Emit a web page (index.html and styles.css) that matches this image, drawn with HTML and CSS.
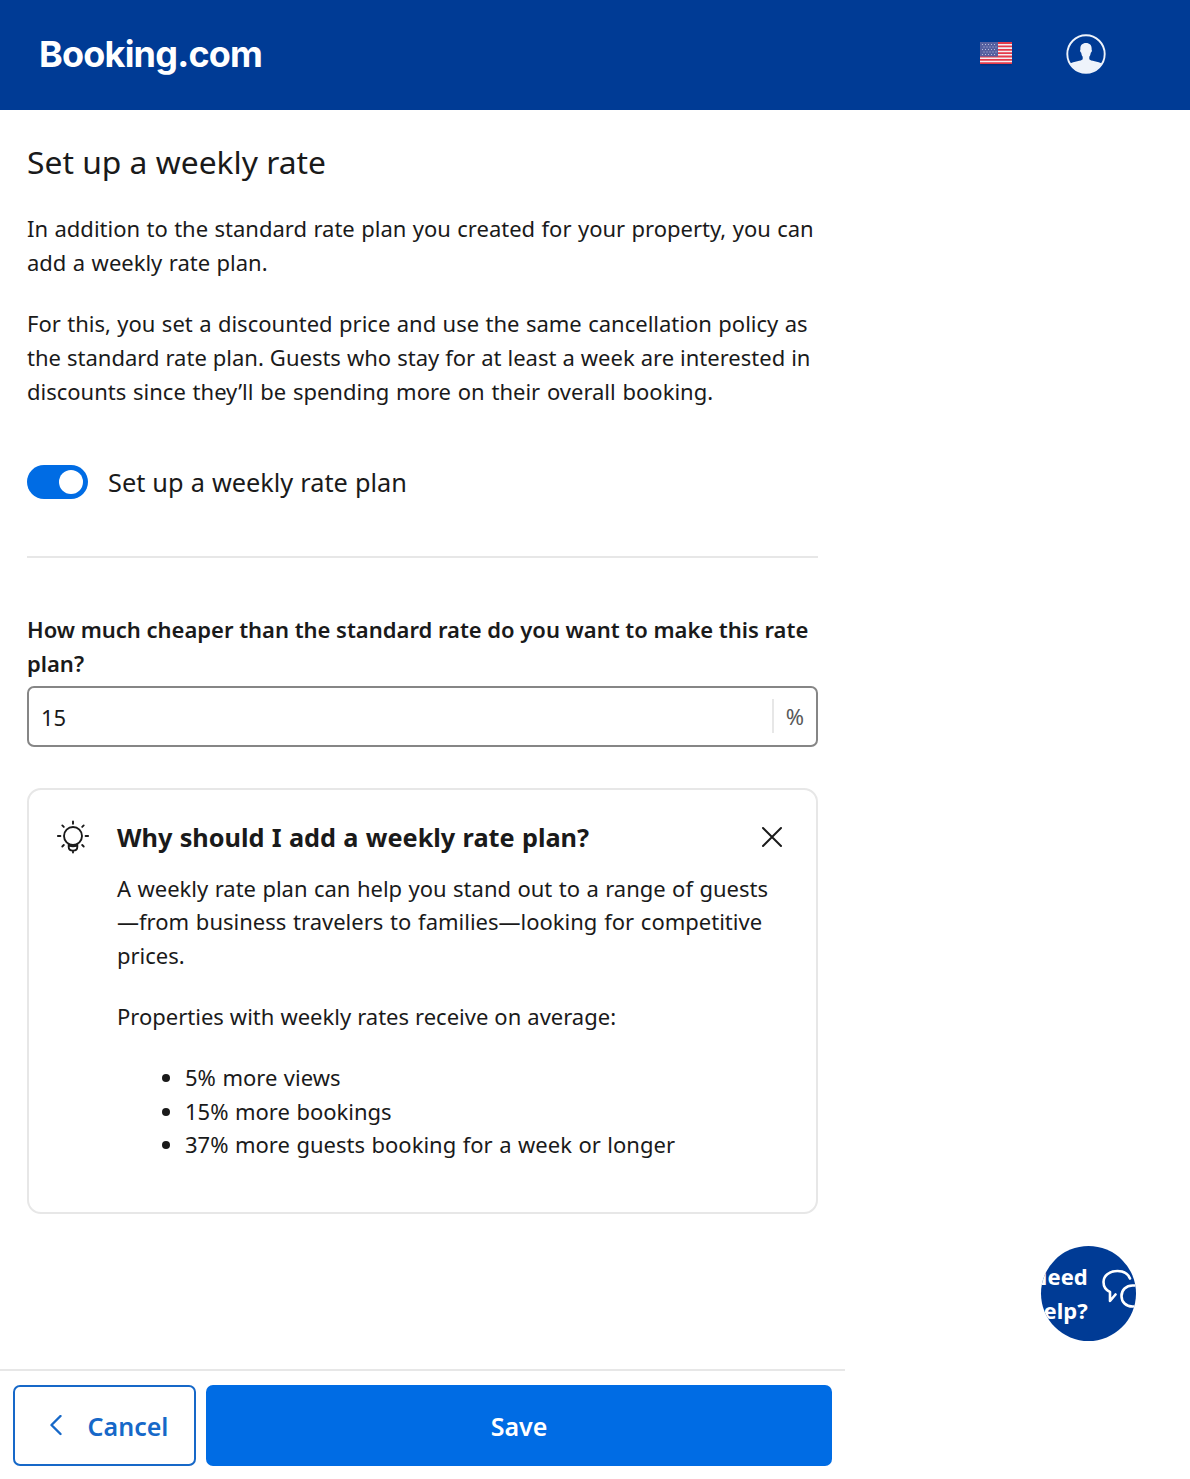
FILE: index.html
```html
<!DOCTYPE html>
<html lang="en">
<head>
<meta charset="utf-8">
<title>Set up a weekly rate</title>
<link rel="stylesheet" href="styles.css">
</head>
<body>
<header class="header">
  <div class="logo">Booking.com</div>
  <div class="header-actions">
    <svg class="flag" width="34" height="26" viewBox="0 0 34 26" aria-label="United States">
      <rect x="1.500" y="2.500" width="31" height="22" fill="#002a70" opacity=".6"/>
      <rect x="1" y="1" width="32" height="22" fill="#f4eef2"/>
      <path d="M1 2h32M1 5.400h32M1 8.800h32M1 12.200h32M1 15.500h32M1 18.900h32M1 22.200h32" stroke="#e33b4b" stroke-width="1.800"/>
      <rect x="1" y="1" width="18" height="14.500" fill="#5560a0"/>
      <path d="M3 3.500h15M4.500 6h13M3 8.500h15M4.500 11h13M3 13.500h15" stroke="#b9bddb" stroke-width="1" stroke-dasharray="1 2"/>
    </svg>
    <svg class="avatar" width="40" height="40" viewBox="0 0 40 40" aria-label="Account">
      <defs><clipPath id="disc"><circle cx="20" cy="20" r="18.500"/></clipPath></defs>
      <path clip-path="url(#disc)" fill="#eef3fb" d="M20 9c-4 0-6 2.700-5.600 6.500-.6.600-.3 2.600.8 3.200.3 2 .8 3.200 1.500 4v2.500c-1 1.800-8.900 2.200-13.200 4.500V40h33V29.700c-4.300-2.300-12.200-2.700-13.200-4.500v-2.500c.7-.8 1.200-2 1.500-4 1.100-.6 1.400-2.600.8-3.200C26 11.700 24 9 20 9z"/>
      <circle cx="20" cy="20" r="18.700" fill="none" stroke="#eef3fb" stroke-width="1.900"/>
    </svg>
  </div>
</header>

<main class="content">
  <h1 class="title">Set up a weekly rate</h1>
  <p class="text intro">In addition to the standard rate plan you created for your property, you can<br>add a weekly rate plan.</p>
  <p class="text">For this, you set a discounted price and use the same cancellation policy as<br><span class="tight">the standard rate plan. Guests who stay for at least a week are interested in</span><br><span class="loose">discounts since they’ll be spending more on their overall booking.</span></p>

  <div class="toggle-row">
    <span class="toggle"><span class="knob"></span></span>
    <span class="toggle-label">Set up a weekly rate plan</span>
  </div>

  <label class="question">How much cheaper than the standard rate do you want to make this rate<br>plan?</label>
  <div class="field">
    <span class="value">15</span>
    <span class="unit">%</span>
  </div>

  <section class="card">
    <svg class="bulb" width="34" height="34" viewBox="0 0 34 34" fill="none" stroke="#1a1a1a" stroke-width="1.900" stroke-linecap="round">
      <circle cx="17" cy="16" r="9"/>
      <path d="M12.700 24v3c0 2.200 1.900 3.600 4.300 3.600s4.300-1.400 4.300-3.600v-3M12.900 25.500c2.600.9 5.600.9 8.200 0M17 31v1.500M17 1.500v2.300M1.900 16h2.500M29.600 16h2.500M6.300 5.400l1.500 1.500M27.700 5.400l-1.500 1.500M6.300 26.500l1.500-1.500M27.700 26.500l-1.500-1.500"/>
    </svg>
    <div class="card-body">
      <h2 class="card-title">Why should I add a weekly rate plan?</h2>
      <p class="text">A weekly rate plan can help you stand out to a range of guests<br><span class="loose">—from business travelers to families—looking for competitive</span><br>prices.</p>
      <p class="text tight">Properties with weekly rates receive on average:</p>
      <ul class="list">
        <li>5% more views</li>
        <li>15% more bookings</li>
        <li>37% more guests booking for a week or longer</li>
      </ul>
    </div>
    <svg class="close" width="22" height="22" viewBox="0 0 22 22" fill="none" stroke="#1a1a1a" stroke-width="2" stroke-linecap="round"><path d="M2 2l18 18M20 2L2 20"/></svg>
  </section>
</main>

<footer class="footer">
  <button class="btn cancel"><svg width="14" height="22" viewBox="0 0 14 22" fill="none" stroke="#1668c8" stroke-width="2.400" stroke-linecap="round" stroke-linejoin="round"><path d="M11.500 1L2.500 10l9 9"/></svg><span>Cancel</span></button>
  <button class="btn save">Save</button>
</footer>

<div class="help">
  <span class="help-text">Need<br>help?</span>
  <svg class="chat" width="46" height="42" viewBox="0 0 46 42" fill="none" stroke="#fff" stroke-width="2.600" stroke-linecap="round" stroke-linejoin="round">
    <path d="M28 9.500C26 4.500 21.500 2 15.500 2 7 2 1.500 7 1.500 13c0 4.500 2.500 8.200 6.500 10V32l5.500-6.500"/>
    <path d="M37 16.500h-6.500c-6.500 0-11 4.500-11 10.500s4.500 10.500 11 10.500H37"/>
  </svg>
</div>
</body>
</html>
```

FILE: styles.css
```css
* { box-sizing: border-box; }
body {
  position: relative;
  margin: 0;
  height: 1479px;
  display: flex;
  flex-direction: column;
  overflow: hidden;
  background: #fff;
  color: #1a1a1a;
  font-family: "Noto Sans", "Open Sans", sans-serif;
  white-space: nowrap;
}
.header {
  height: 110px;
  flex: none;
  display: flex;
  align-items: center;
  justify-content: space-between;
  padding: 0 84px 3px 39px;
  background: #003b95;
}
.logo {
  color: #fff;
  font: 700 36px/44px Inter, sans-serif;
  letter-spacing: -.8px;
}
.header-actions { display: flex; align-items: center; gap: 53px; }
.flag, .avatar { display: block; }

.content { width: 845px; padding: 28px 27px 0; }
.title { margin: 0; font-size: 31.8px; font-weight: 400; line-height: 47px; }
.text { margin: 0 0 27px; font-size: 22px; line-height: 33.8px; word-spacing: .7px; }
.intro { margin-top: 27.4px; }
.tight { word-spacing: .3px; }
.loose { word-spacing: 1.05px; }
.toggle-row {
  display: flex;
  align-items: center;
  gap: 20px;
  height: 150px;
  margin-top: -27.4px;
  border-bottom: 2px solid #e7e7e7;
}
.toggle {
  display: flex;
  justify-content: flex-end;
  align-items: center;
  width: 61px;
  height: 34px;
  padding-right: 5px;
  border-radius: 17px;
  background: #006ce4;
}
.knob { width: 24px; height: 24px; border-radius: 50%; background: #fff; }
.toggle-label { padding-top: 1px; font-size: 25.3px; line-height: 40px; word-spacing: .5px; }
.question { display: block; margin-top: 55px; font-size: 22px; font-weight: 600; line-height: 33.8px; word-spacing: -.1px; }
.field {
  display: flex;
  align-items: center;
  justify-content: space-between;
  height: 61px;
  margin-top: 5px;
  padding: 0 12px 0 12px;
  border: 2px solid #868686;
  border-radius: 7px;
  font-size: 22px;
}
.value { padding-top: 2px; }
.unit { padding-left: 12px; border-left: 2px solid #e7e7e7; color: #595959; line-height: 34px; }
.card {
  display: flex;
  align-items: flex-start;
  height: 426px;
  margin-top: 41px;
  padding: 25px 33px 0 27px;
  border: 2px solid #e7e7e7;
  border-radius: 14px;
}
.bulb { flex: none; margin-top: 5px; }
.card-body { flex: 1; min-width: 0; margin-left: 27px; }
.card-title { margin: 2px 0 15px; font-size: 25.3px; font-weight: 700; line-height: 40px; word-spacing: .7px; }
.close { flex: none; margin-top: 11px; }
.list { margin: 0; padding-left: 68px; font-size: 22px; line-height: 33.8px; word-spacing: .8px; }

.footer {
  display: flex;
  gap: 10px;
  width: 845px;
  height: 110px;
  margin-top: auto;
  padding: 14px 13px 13px;
  border-top: 2px solid #e7e7e7;
}
.btn {
  display: flex;
  align-items: center;
  justify-content: center;
  height: 81px;
  border-radius: 7px;
  font: 600 25px/40px "Noto Sans", sans-serif;
}
.cancel { width: 183px; gap: 25px; padding: 0 0 0 8px; border: 2px solid #1668c8; background: #fff; color: #1668c8; }
.save { flex: 1; border: 0; background: #006ce4; color: #fff; }

.help {
  position: absolute;
  left: 1041px;
  top: 1246px;
  width: 95px;
  height: 95px;
  display: flex;
  align-items: center;
  justify-content: center;
  gap: 14px;
  overflow: hidden;
  border-radius: 50%;
  background: #003b95;
  color: #fff;
}
.help-text { flex: none; text-align: right; font-size: 22px; font-weight: 700; line-height: 33.8px; }
.chat { flex: none; margin-bottom: 8px; }
```
